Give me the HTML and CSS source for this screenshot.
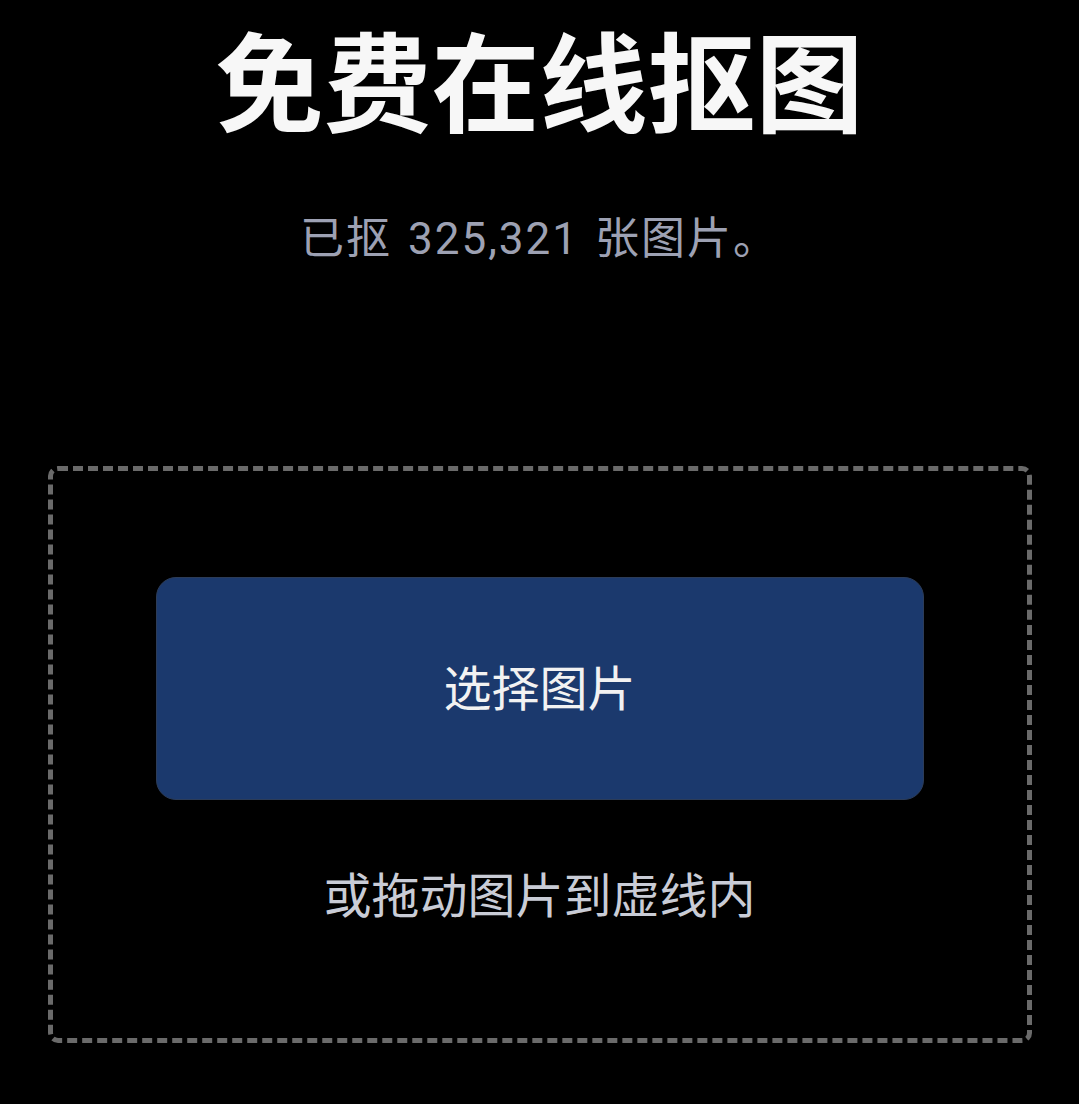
FILE: index.html
```html
<!DOCTYPE html>
<html lang="zh-CN">
<head>
  <meta charset="UTF-8" />
  <title>免费在线抠图</title>
  <meta name="viewport" content="width=device-width, initial-scale=1.0" />
  <link rel="stylesheet" href="styles.css">
</head>
<body>
  <main class="page">
    <h1 class="title">免费在线抠图</h1>
    <p class="count">已抠 325,321 张图片。</p>

    <div class="dropzone">
      <button class="pick">选择图片</button>
      <p class="hint">或拖动图片到虚线内</p>
    </div>
  </main>
</body>
</html>
```

FILE: styles.css
```css
* { box-sizing: border-box; }
body { margin: 0; background: #000; color: #fff; font-family: Roboto, "Noto Sans CJK SC", sans-serif; }
.page { display: flex; flex-direction: column; align-items: center; padding-top: 23px; }
.title { margin: 0; font-size: 108px; line-height: 108px; font-weight: 700; color: #f7f7f7; font-family: "Noto Sans CJK SC", sans-serif; }
.count { margin: 82px 0 0; font-size: 44px; line-height: 52px; letter-spacing: 2px; word-spacing: 3px; color: #9da1b3; }
.dropzone { margin-top: 201px; width: 984px; height: 577px; border: 5px dashed #6a6a6a; border-radius: 10px; padding: 106px 103px 0; display: flex; flex-direction: column; align-items: center; }
.pick { width: 768px; height: 223px; padding: 0 0 8px; background: #1b396d; color: #f2f2f2; border: 1px solid #2c3c58; border-radius: 20px; font-size: 48px; font-family: "Noto Sans CJK SC", sans-serif; cursor: pointer; }
.hint { margin: 64px 0 0; font-size: 48px; line-height: 56px; color: #c9ccd6; font-family: "Noto Sans CJK SC", sans-serif; }
```
